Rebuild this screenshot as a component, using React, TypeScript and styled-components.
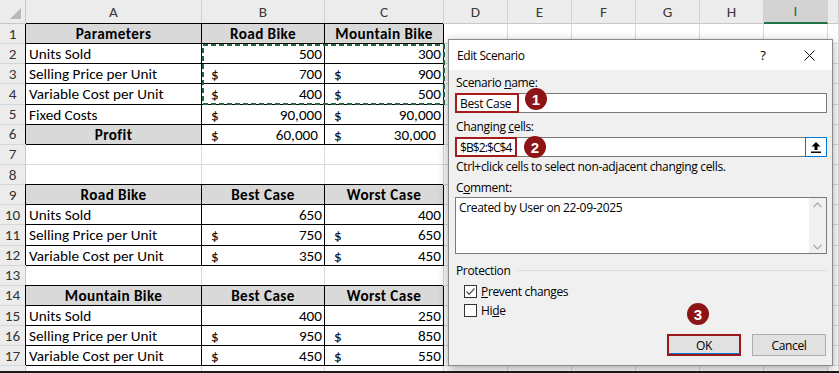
import React from 'react';
import styled, { createGlobalStyle } from 'styled-components';

const GlobalStyle = createGlobalStyle`
  html, body {
    margin: 0;
    padding: 0;
    background: #fff;
  }
  body {
    overflow: hidden;
  }
`;

const COLS = '26px 176px 123px 119px repeat(6, 64px) 1fr';
const SHEET_FONT = "Carlito, Lato, 'Liberation Sans', sans-serif";
const UI_FONT = "'Open Sans', 'Noto Sans', 'Liberation Sans', sans-serif";

const Frame = styled.div`
  position: relative;
  width: 839px;
  height: 373px;
  box-sizing: border-box;
  overflow: hidden;
  border-bottom: 2px solid #1a1a1a;
  background: #fff;
  font-family: ${SHEET_FONT};
  font-size: 15.2px;
  color: #000;
`;

const HeaderRow = styled.div`
  display: grid;
  grid-template-columns: ${COLS};
  height: 24px;
`;

const Corner = styled.div`
  position: relative;
  box-sizing: border-box;
  background: #ececec;
  border-right: 1px solid #c8c8c8;
  border-bottom: 1px solid #c8c8c8;
  &::after {
    content: '';
    position: absolute;
    right: 4px;
    bottom: 4px;
    width: 11px;
    height: 11px;
    background: #b9b9b9;
    clip-path: polygon(100% 0, 100% 100%, 0 100%);
  }
`;

const ColHead = styled.div<{ $active?: boolean }>`
  box-sizing: border-box;
  display: flex;
  align-items: center;
  justify-content: center;
  background: ${(p) => (p.$active ? '#d3d3d3' : '#ececec')};
  color: ${(p) => (p.$active ? '#1d6b48' : '#3a3a3a')};
  border-right: 1px solid #d0d0d0;
  border-bottom: ${(p) => (p.$active ? '2px solid #217346' : '1px solid #c8c8c8')};
`;

const Row = styled.div`
  display: grid;
  grid-template-columns: ${COLS};
  height: 20.15px;
`;

const RowHead = styled.div`
  box-sizing: border-box;
  display: flex;
  align-items: center;
  justify-content: center;
  background: #ececec;
  color: #333;
  border-right: 1px solid #c8c8c8;
  border-bottom: 1px solid #d6d6d6;
`;

const Cell = styled.div<{
  $fill?: boolean;
  $bold?: boolean;
  $center?: boolean;
  $boxed?: boolean;
  $pr?: number;
}>`
  box-sizing: border-box;
  display: flex;
  align-items: center;
  justify-content: ${(p) => (p.$center ? 'center' : 'space-between')};
  padding: 1px ${(p) => p.$pr ?? 3}px 0 3px;
  white-space: nowrap;
  overflow: hidden;
  background: ${(p) => (p.$fill ? '#d9d9d9' : 'transparent')};
  font-weight: ${(p) => (p.$bold ? 900 : 400)};
  letter-spacing: ${(p) => (p.$bold ? '0.4px' : '0')};
  border-right: 1px solid ${(p) => (p.$boxed ? '#000' : '#dadada')};
  border-bottom: 1px solid ${(p) => (p.$boxed ? '#000' : '#dadada')};
  box-shadow: ${(p) => (p.$boxed ? '-1px -1px 0 #000' : 'none')};
`;

const Dollar = styled.span`
  padding-left: 6px;
`;

const Num = styled.span`
  margin-left: auto;
`;

const Marquee = styled.svg`
  position: absolute;
  left: 202px;
  top: 44px;
  pointer-events: none;
`;

/* ---------- dialog ---------- */

const Dialog = styled.div`
  position: absolute;
  left: 448px;
  top: 39px;
  width: 385px;
  height: 327px;
  box-sizing: border-box;
  display: flex;
  flex-direction: column;
  border: 1px solid #8a8a8a;
  background: #f0f0f0;
  box-shadow: 0 3px 10px rgba(0, 0, 0, 0.35);
  font-family: ${UI_FONT};
  font-size: 12px;
  letter-spacing: -0.35px;
  color: #000;
`;

const TitleBar = styled.div`
  height: 30px;
  display: flex;
  align-items: center;
  background: #fff;
  padding-left: 8px;
`;

const Title = styled.div`
  flex: 1;
  letter-spacing: -0.4px;
`;

const CaptionButton = styled.div`
  width: 46px;
  height: 30px;
  display: flex;
  align-items: center;
  justify-content: center;
  font-size: 13px;
`;

const Body = styled.div`
  flex: 1;
  display: flex;
  flex-direction: column;
  padding: 0 5px 0 6px;
`;

const Label = styled.div<{ $mt: number }>`
  height: 16px;
  line-height: 16px;
  margin-top: ${(p) => p.$mt}px;
  padding-left: 1px;
  white-space: nowrap;
`;

const Field = styled.div<{ $mt: number }>`
  position: relative;
  height: 20px;
  margin-top: ${(p) => p.$mt}px;
  box-sizing: border-box;
  display: flex;
  border: 1px solid #7a7a7a;
  background: #fff;
`;

const Marked = styled.div<{ $w: number; $tight?: boolean }>`
  width: ${(p) => p.$w}px;
  margin: -1px 0 -1px -1px;
  box-sizing: border-box;
  display: flex;
  align-items: center;
  padding-left: 3px;
  border: 2px solid #a31b1b;
  white-space: nowrap;
  letter-spacing: ${(p) => (p.$tight ? '-0.9px' : 'inherit')};
`;

const Badge = styled.div<{ $x: number; $y: number }>`
  position: absolute;
  left: ${(p) => p.$x}px;
  top: ${(p) => p.$y}px;
  width: 22px;
  height: 22px;
  border-radius: 50%;
  background: #8e1515;
  color: #fff;
  display: flex;
  align-items: center;
  justify-content: center;
  font-family: 'Liberation Sans', Arial, sans-serif;
  font-weight: 700;
  font-size: 15px;
  letter-spacing: 0;
  z-index: 2;
`;

const PickButton = styled.div`
  margin: -1px -1px -1px auto;
  width: 22px;
  box-sizing: border-box;
  border: 1px solid #0078d7;
  background: #fff;
  display: flex;
  align-items: center;
  justify-content: center;
`;

const CommentBox = styled.div`
  margin-top: 1px;
  height: 57px;
  box-sizing: border-box;
  display: flex;
  border: 1px solid #7a7a7a;
  background: #fff;
`;

const CommentText = styled.div`
  flex: 1;
  padding: 2px 3px;
  line-height: 16px;
`;

const ScrollTrack = styled.div`
  width: 17px;
  display: flex;
  flex-direction: column;
  justify-content: space-between;
  align-items: center;
  background: #f0f0f0;
  padding: 4px 0 3px;
`;

const Group = styled.div`
  margin-top: 8px;
  height: 16px;
  display: flex;
  align-items: center;
  gap: 6px;
  padding-left: 1px;
  &::after {
    content: '';
    flex: 1;
    height: 1px;
    background: #dcdcdc;
  }
`;

const CheckRow = styled.div<{ $mt: number }>`
  margin-top: ${(p) => p.$mt}px;
  height: 16px;
  display: flex;
  align-items: center;
  gap: 4px;
  padding-left: 9px;
`;

const Box = styled.div`
  width: 13px;
  height: 13px;
  box-sizing: border-box;
  border: 1px solid #333;
  background: #fff;
  display: flex;
  align-items: center;
  justify-content: center;
`;

const Buttons = styled.div`
  margin-top: 16px;
  margin-right: 1px;
  display: flex;
  justify-content: flex-end;
  gap: 11px;
`;

const Button = styled.div<{ $marked?: boolean }>`
  position: relative;
  width: 74px;
  height: 22px;
  box-sizing: border-box;
  display: flex;
  align-items: center;
  justify-content: center;
  background: #e1e1e1;
  border: ${(p) => (p.$marked ? '2px solid #9b1818' : '1px solid #adadad')};
  box-shadow: ${(p) => (p.$marked ? 'inset 0 -1px 0 #0078d7' : 'none')};
`;

type Spec = {
  t?: string;
  money?: string;
  bold?: boolean;
  center?: boolean;
  fill?: boolean;
  pr?: number;
};

const head = (t: string): Spec => ({ t, bold: true, center: true, fill: true });
const plain = (t: string): Spec => ({ t });
const num = (t: string): Spec => ({ money: t });
const usd = (t: string, pr?: number): Spec => ({ money: t, t: '$', pr });

const ROWS: (Spec[] | null)[] = [
  [head('Parameters'), head('Road Bike'), head('Mountain Bike')],
  [plain('Units Sold'), num('500'), num('300')],
  [plain('Selling Price per Unit'), usd('700'), usd('900')],
  [plain('Variable Cost per Unit'), usd('400'), usd('500')],
  [plain('Fixed Costs'), usd('90,000'), usd('90,000')],
  [head('Profit'), usd('60,000', 6), usd('30,000', 7)],
  null,
  null,
  [head('Road Bike'), head('Best Case'), head('Worst Case')],
  [plain('Units Sold'), num('650'), num('400')],
  [plain('Selling Price per Unit'), usd('750'), usd('650')],
  [plain('Variable Cost per Unit'), usd('350'), usd('450')],
  null,
  [head('Mountain Bike'), head('Best Case'), head('Worst Case')],
  [plain('Units Sold'), num('400'), num('250')],
  [plain('Selling Price per Unit'), usd('950'), usd('850')],
  [plain('Variable Cost per Unit'), usd('450'), usd('550')],
  null,
];

const LETTERS = ['A', 'B', 'C', 'D', 'E', 'F', 'G', 'H', 'I', ''];

const SheetCell: React.FC<{ spec?: Spec }> = ({ spec }) => {
  if (!spec) return <Cell />;
  if (spec.money !== undefined) {
    return (
      <Cell $boxed $pr={spec.pr ?? 2}>
        {spec.t && <Dollar>{spec.t}</Dollar>}
        <Num>{spec.money}</Num>
      </Cell>
    );
  }
  return (
    <Cell $boxed $bold={spec.bold} $center={spec.center} $fill={spec.fill}>
      {spec.t}
    </Cell>
  );
};

const Sheet: React.FC = () => (
  <>
    <HeaderRow>
      <Corner />
      {LETTERS.map((l, i) => (
        <ColHead key={i} $active={l === 'I'}>
          {l}
        </ColHead>
      ))}
    </HeaderRow>
    {ROWS.map((r, i) => (
      <Row key={i}>
        {/* last row is only a sliver in the shot, so no number shows */}
        <RowHead>{i < 17 ? i + 1 : ''}</RowHead>
        {r ? (
          r.map((s, j) => <SheetCell key={j} spec={s} />)
        ) : (
          <>
            <Cell />
            <Cell />
            <Cell />
          </>
        )}
        {Array.from({ length: 7 }).map((_, j) => (
          <Cell key={'e' + j} />
        ))}
      </Row>
    ))}
    <Marquee width="243" height="61" viewBox="0 0 243 61">
      <rect
        x="1"
        y="1"
        width="241"
        height="59"
        fill="none"
        stroke="#1f6b3e"
        strokeWidth="2"
        strokeDasharray="5 3"
      />
    </Marquee>
  </>
);

const ScenarioDialog: React.FC = () => (
  <Dialog>
    <TitleBar>
      <Title>Edit Scenario</Title>
      <CaptionButton>?</CaptionButton>
      <CaptionButton>
        <svg width="11" height="11" viewBox="0 0 11 11">
          <path d="M0.5 0.5 L10.5 10.5 M10.5 0.5 L0.5 10.5" stroke="#111" strokeWidth="1" />
        </svg>
      </CaptionButton>
    </TitleBar>
    <Body>
      <Label $mt={5}>
        Scenario <u>n</u>ame:
      </Label>
      <Field $mt={2}>
        <Marked $w={64}>Best Case</Marked>
        <Badge $x={69} $y={-6}>1</Badge>
      </Field>
      <Label $mt={6}>
        Changing <u>c</u>ells:
      </Label>
      <Field $mt={2}>
        <Marked $w={62} $tight>
          $B$2:$C$4
        </Marked>
        <Badge $x={68} $y={-2}>2</Badge>
        <PickButton>
          <svg width="12" height="12" viewBox="0 0 12 12">
            <path d="M6 1 L10.5 5.5 H7.5 V9 H4.5 V5.5 H1.5 Z" fill="#000" />
            <rect x="1" y="10.5" width="10" height="1.5" fill="#000" />
          </svg>
        </PickButton>
      </Field>
      <Label $mt={2}>Ctrl+click cells to select non-adjacent changing cells.</Label>
      <Label $mt={5}>
        C<u>o</u>mment:
      </Label>
      <CommentBox>
        <CommentText>Created by User on 22-09-2025</CommentText>
        <ScrollTrack>
          <svg width="9" height="6" viewBox="0 0 9 6">
            <path d="M0.5 5 L4.5 1 L8.5 5" fill="none" stroke="#a6a6a6" strokeWidth="1.2" />
          </svg>
          <svg width="9" height="6" viewBox="0 0 9 6">
            <path d="M0.5 1 L4.5 5 L8.5 1" fill="none" stroke="#a6a6a6" strokeWidth="1.2" />
          </svg>
        </ScrollTrack>
      </CommentBox>
      <Group>Protection</Group>
      <CheckRow $mt={5}>
        <Box>
          <svg width="11" height="11" viewBox="0 0 11 11">
            <path d="M1.5 5.5 L4.2 8.2 L9.5 2.5" fill="none" stroke="#5a5a5a" strokeWidth="1.3" />
          </svg>
        </Box>
        <span>
          <u>P</u>revent changes
        </span>
      </CheckRow>
      <CheckRow $mt={3}>
        <Box />
        <span>
          Hi<u>d</u>e
        </span>
      </CheckRow>
      <Buttons>
        <Button $marked>
          OK
          <Badge $x={18} $y={-33}>3</Badge>
        </Button>
        <Button>Cancel</Button>
      </Buttons>
    </Body>
  </Dialog>
);

export default function App() {
  return (
    <>
      <GlobalStyle />
      <Frame>
        <Sheet />
        <ScenarioDialog />
      </Frame>
    </>
  );
}
